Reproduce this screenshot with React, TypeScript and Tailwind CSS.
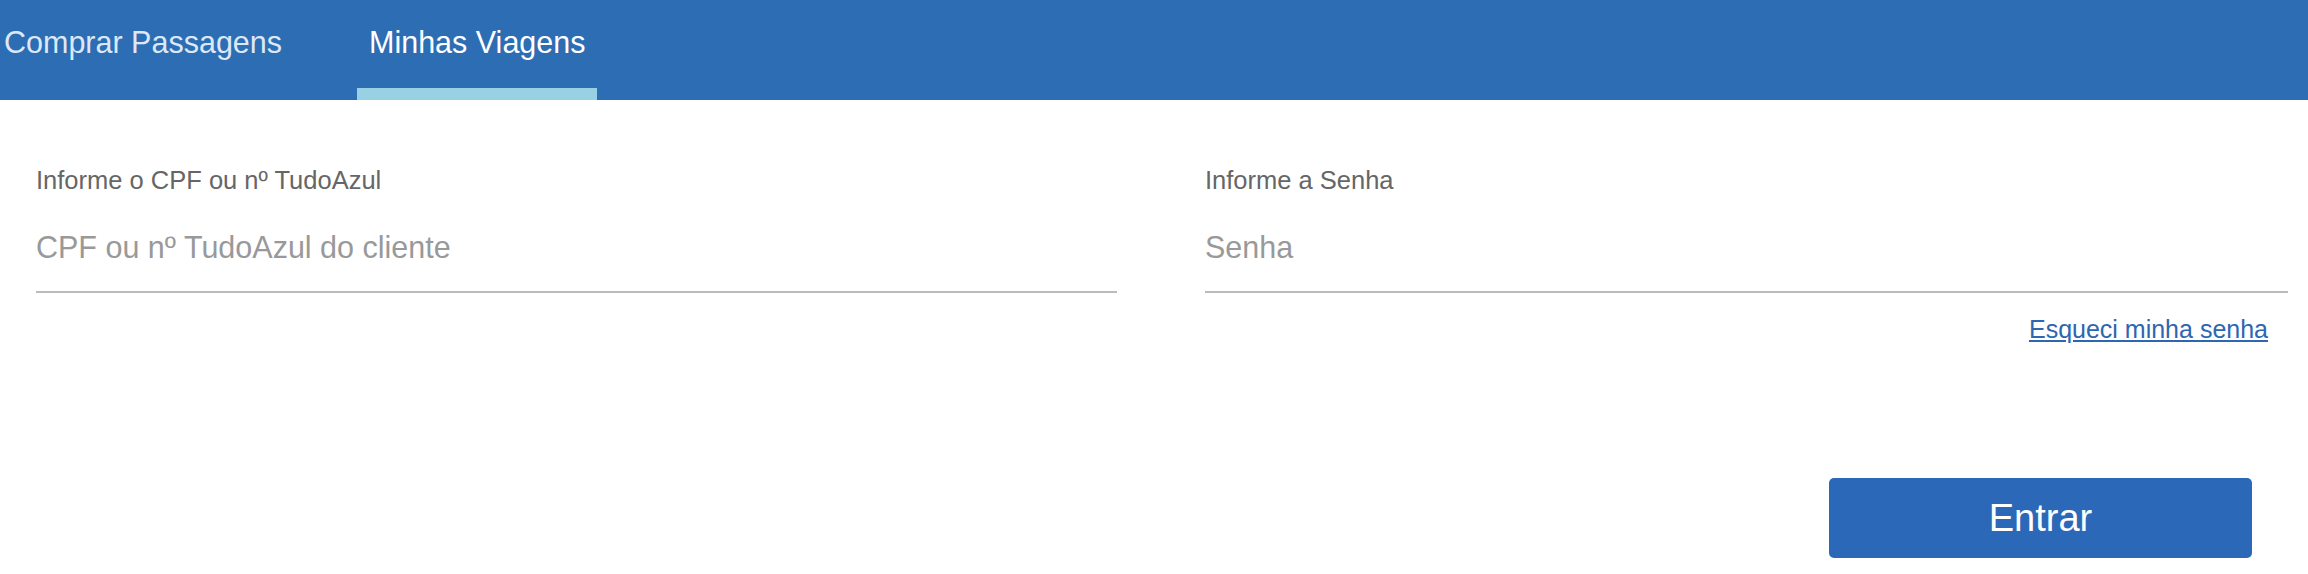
import { useState } from "react";

export default function App() {
  const [doc, setDoc] = useState("");
  const [senha, setSenha] = useState("");

  return (
    <div className="w-[2308px] h-[574px] bg-white font-['Liberation_Sans',Arial,sans-serif]">
      {/* abas */}
      <div className="flex h-[100px] bg-[#2d6db3]">
        <div className="pl-[4px] pr-[13px] pt-[24px] text-[30.5px] leading-[36px] text-[#dce8f6]">
          Comprar Passagens
        </div>
        <div className="ml-[62px] px-[12px] pt-[24px] text-[30.5px] leading-[36px] text-white border-b-[12px] border-[#98d1e3]">
          Minhas Viagens
        </div>
      </div>

      <form className="flex pl-[36px] pt-[65px]" onSubmit={(e) => e.preventDefault()}>
        <div className="w-[1081px]">
          <label className="block text-[25.5px] leading-[30px] text-[#666]">
            Informe o CPF ou nº TudoAzul
          </label>
          <input
            value={doc}
            onChange={(e) => setDoc(e.target.value)}
            placeholder="CPF ou nº TudoAzul do cliente"
            className="mt-[8px] block w-full h-[90px] border-b-2 border-[#bbbbbb] text-[30.5px] text-[#333] placeholder:text-[#999] outline-none"
          />
        </div>

        <div className="ml-[88px] w-[1083px]">
          <label className="block text-[25.5px] leading-[30px] text-[#666]">
            Informe a Senha
          </label>
          <input
            type="password"
            value={senha}
            onChange={(e) => setSenha(e.target.value)}
            placeholder="Senha"
            className="mt-[8px] block w-full h-[90px] border-b-2 border-[#bbbbbb] text-[30.5px] text-[#333] placeholder:text-[#999] outline-none"
          />
          <div className="flex justify-end pr-[20px] mt-[21px]">
            <a href="#" className="text-[25px] leading-[30px] text-[#2d66b1] underline">
              Esqueci minha senha
            </a>
          </div>
          <div className="flex justify-end pr-[36px] mt-[134px]">
            <button
              type="submit"
              className="w-[423px] h-[80px] rounded-[5px] bg-[#2b69b8] text-white text-[38px]"
            >
              Entrar
            </button>
          </div>
        </div>
      </form>
    </div>
  );
}
